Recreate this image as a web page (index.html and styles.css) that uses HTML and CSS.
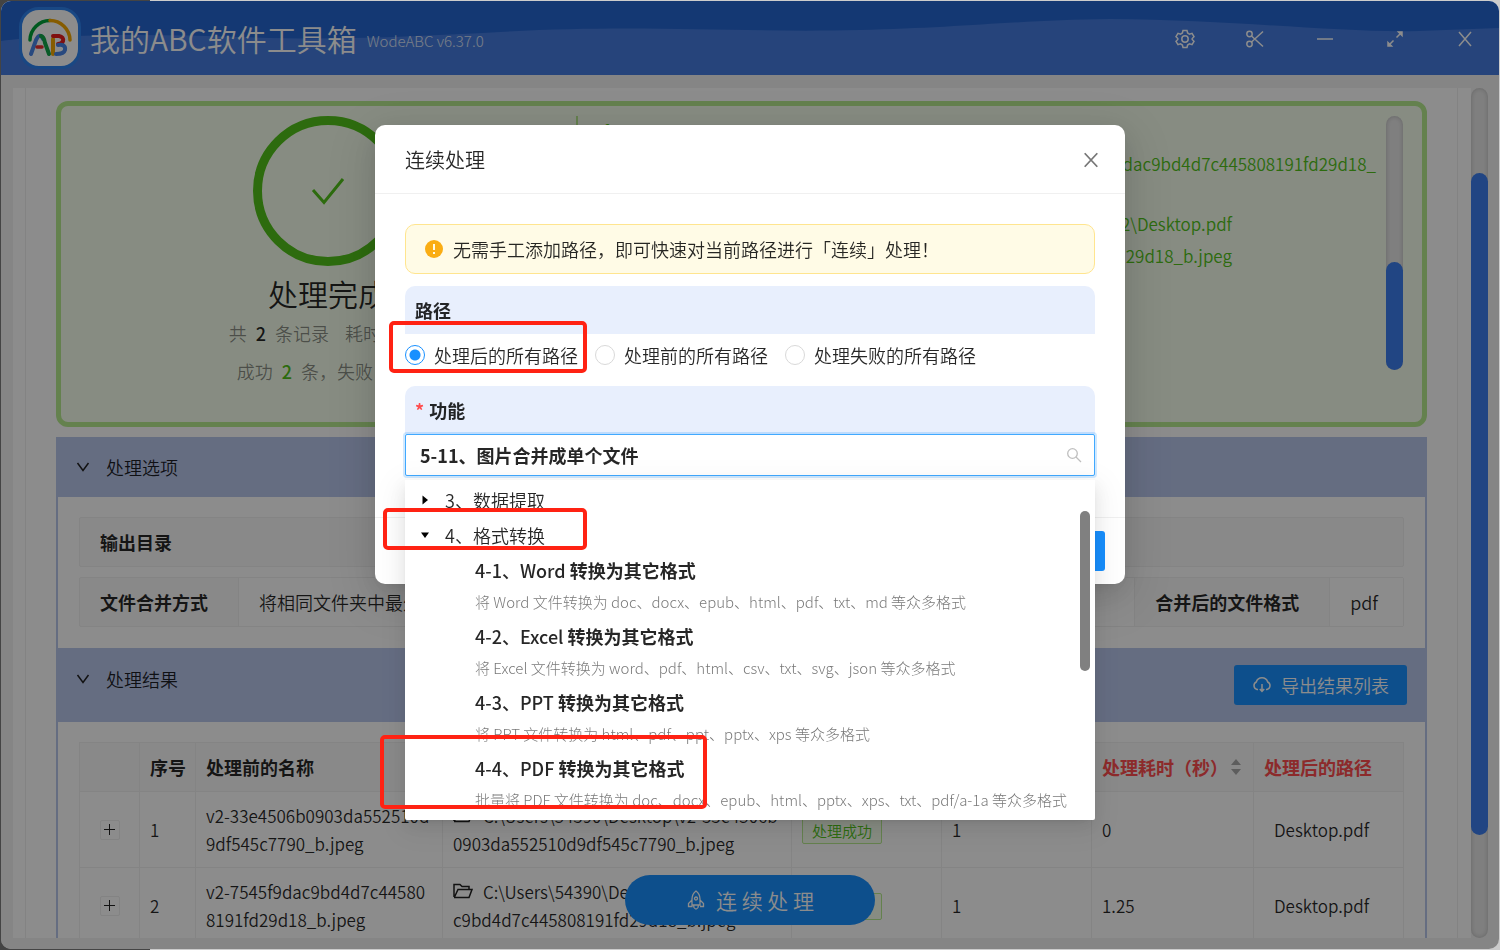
FILE: index.html
```html
<!DOCTYPE html>
<html lang="zh-CN">
  <head>
    <meta charset="UTF-8" />
    <meta name="viewport" content="width=device-width, initial-scale=1.0" />
    <title>我的ABC软件工具箱</title>
    <link rel="stylesheet" href="styles.css">
  </head>
  <body>
    <div class="window">
      <header class="titlebar">
        <svg class="wave" viewBox="0 0 1500 74" preserveAspectRatio="none">
          <path d="M0 40C40 34 140 32 240 36C340 40 420 35 500 31C640 23 740 32 860 29C960 27 1020 19 1110 18C1240 19 1340 32 1420 30L1500 27V74H0Z" fill="#457de0" />
        </svg>
        <div class="logo">
          <svg viewBox="0 0 56 56" fill="none" stroke-linecap="round">
            <path d="M8 30A20 20 0 0 1 28 10.500" stroke="#00a33a" stroke-width="3.500" />
            <path d="M28 10.500A20 20 0 0 1 48 30" stroke="#f5a800" stroke-width="3.500" />
            <path d="M9 44L14 30Q18 22 21 29" stroke="#4a86e8" stroke-width="4" />
            <path d="M19 26Q22 27 23 33L27 44" stroke="#12a64a" stroke-width="4" />
            <path d="M15 37H20" stroke="#ea2c2c" stroke-width="3.500" />
            <path d="M31 29V44" stroke="#f5a800" stroke-width="4" />
            <path d="M31 26H37Q42 27 41 31Q40 34 36 34" stroke="#ea1c1c" stroke-width="4" />
            <path d="M36 35Q44 34 43 40Q42 44 34 44" stroke="#4a86e8" stroke-width="4" />
          </svg>
        </div>
        <h1>我的ABC软件工具箱</h1>
        <span class="version">WodeABC v6.37.0</span>
        <nav class="tools">
          <button aria-label="设置"><svg viewBox="0 0 20 20"><path d="M8 1.500H12L12.600 4L14.500 5.100L17 4.400L19 7.700L17.200 9.500V10.500L19 12.300L17 15.600L14.500 14.900L12.600 16L12 18.500H8L7.400 16L5.500 14.900L3 15.600L1 12.300L2.800 10.500V9.500L1 7.700L3 4.400L5.500 5.100L7.400 4Z" /><circle cx="10" cy="10" r="3.200" /></svg></button>
          <button aria-label="截图"><svg viewBox="0 0 20 20"><circle cx="4.500" cy="5" r="2.700" /><circle cx="4.500" cy="15" r="2.700" /><path d="M6.500 7L18 17.500M6.500 13L18 2.500" /></svg></button>
          <button aria-label="最小化"><svg viewBox="0 0 20 20"><path d="M2 10H18" /></svg></button>
          <button aria-label="最大化"><svg viewBox="0 0 20 20"><path d="M11.500 8.500L16 4M8.500 11.500L4 16" /><path class="solid" d="M13.500 3H17V6.500ZM6.500 17H3V13.500Z" /></svg></button>
          <button aria-label="关闭"><svg viewBox="0 0 20 20"><path d="M4 3L16 17M16 3L4 17" /></svg></button>
        </nav>
      </header>

      <main class="page">
        <div class="content">
          <section class="result">
            <div class="summary">
              <div class="circle">
                <svg viewBox="0 0 34 28"><path d="M2 13L13 25.500L32 2" /></svg>
              </div>
              <h2>处理完成</h2>
              <p>共 <b>2</b> 条记录 &nbsp; &nbsp;耗时 <b>1</b> 秒</p>
              <p>成功 <b class="ok">2</b> 条，失败 <b>0</b> 条</p>
            </div>
            <div class="log">
              <p class="log-top">1fd29d18_b.jpeg</p>
              <p>v2-7545f9dac9bd4d7c445808191fd29d18_</p>
              <p class="short group">C:\Users\54390\Desktop\2\Desktop.pdf</p>
              <p class="short">v2-7545f9dac9bd4d7c445808191fd29d18_b.jpeg</p>
            </div>
            <div class="bar bar-log"><i></i></div>
          </section>

          <section class="panel">
            <h3><svg viewBox="0 0 14 14"><path d="M1.500 3L7 10.500L12.500 3" /></svg>处理选项</h3>
            <div class="panel-body">
              <dl class="desc">
                <dt>输出目录</dt>
                <dd></dd>
              </dl>
              <dl class="desc">
                <dt>文件合并方式</dt>
                <dd class="grow">将相同文件夹中最外层的文件合并成单个文件</dd>
                <dt>合并后的文件格式</dt>
                <dd>pdf</dd>
              </dl>
            </div>
          </section>

          <section class="panel">
            <h3 class="tall"><svg viewBox="0 0 14 14"><path d="M1.500 3L7 10.500L12.500 3" /></svg>处理结果
              <button class="primary"><svg viewBox="0 0 20 20"><path d="M6 14.500H5A4 4 0 0 1 4.300 7A6 6 0 0 1 15.700 7A4 4 0 0 1 15 14.500H14M10 9V16M7.800 14L10 16.300L12.200 14" /></svg>导出结果列表</button>
            </h3>
            <div class="panel-body">
              <table>
                <colgroup>
                  <col class="c-open"><col class="c-no"><col class="c-name"><col><col class="c-mid"><col class="c-mid"><col class="c-time"><col class="c-out">
                </colgroup>
                <thead>
                  <tr>
                    <th></th>
                    <th>序号</th>
                    <th>处理前的名称</th>
                    <th></th>
                    <th></th>
                    <th></th>
                    <th class="red"><span>处理耗时（秒）<svg class="sort" viewBox="0 0 12 18"><path d="M6 1L11 7H1ZM6 17L11 11H1Z" /></svg></span></th>
                    <th class="red">处理后的路径</th>
                  </tr>
                </thead>
                <tbody>
                  <tr>
                    <td><button class="plus" aria-label="展开"></button></td>
                    <td>1</td>
                    <td>v2-33e4506b0903da552510d<br>9df545c7790_b.jpeg</td>
                    <td><svg class="folder" viewBox="0 0 20 16"><path d="M1 14V1.500H7L9 3.500H16V6M1 14.500H16L19 6.500H5L1.500 14" /></svg>C:\Users\54390\Desktop\v2-33e4506b<br>0903da552510d9df545c7790_b.jpeg</td>
                    <td><span class="tag">处理成功</span></td>
                    <td>1</td>
                    <td>0</td>
                    <td class="out">Desktop.pdf</td>
                  </tr>
                  <tr>
                    <td><button class="plus" aria-label="展开"></button></td>
                    <td>2</td>
                    <td>v2-7545f9dac9bd4d7c44580<br>8191fd29d18_b.jpeg</td>
                    <td><svg class="folder" viewBox="0 0 20 16"><path d="M1 14V1.500H7L9 3.500H16V6M1 14.500H16L19 6.500H5L1.500 14" /></svg>C:\Users\54390\Desktop\v2-7545f9da<br>c9bd4d7c445808191fd29d18_b.jpeg</td>
                    <td><span class="tag">处理成功</span></td>
                    <td>1</td>
                    <td>1.25</td>
                    <td class="out">Desktop.pdf</td>
                  </tr>
                </tbody>
              </table>
            </div>
          </section>
        </div>
        <div class="bar bar-page"><i></i></div>
      </main>

      <button class="float-btn"><svg viewBox="0 0 20 20"><path d="M10 1Q6 4 6 9V15H14V9Q14 4 10 1ZM6 10L2.500 13.500V16.500H6V14M14 10L17.500 13.500V16.500H14M7.500 15L8 17.500Q10 20.500 12 17.500L12.500 15" /><circle cx="10" cy="8.500" r="1.500" /></svg>连 续 处 理</button>
    </div>

    <div class="mask">
      <div class="modal" role="dialog" aria-labelledby="modal-title">
        <div class="modal-head">
          <h2 id="modal-title">连续处理</h2>
          <button aria-label="关闭"><svg viewBox="0 0 20 20"><path d="M3 2.500L17 17.500M17 2.500L3 17.500" /></svg></button>
        </div>
        <form class="modal-body">
          <div class="alert">
            <svg viewBox="0 0 18 18"><circle cx="9" cy="9" r="9" fill="#faad14" /><path d="M9 4V10M9 12V14" stroke="#fffbe6" stroke-width="2" /></svg>
            无需手工添加路径，即可快速对当前路径进行「连续」处理！
          </div>
          <div class="label">路径</div>
          <div class="radios">
            <label><input type="radio" name="path" checked>处理后的所有路径</label>
            <label><input type="radio" name="path">处理前的所有路径</label>
            <label><input type="radio" name="path">处理失败的所有路径</label>
          </div>
          <label class="label" for="feature"><em>*</em>功能</label>
          <div class="select">
            <input id="feature" type="text" value="5-11、图片合并成单个文件">
            <svg viewBox="0 0 16 16"><circle cx="6.500" cy="6.500" r="4.800" /><path d="M10 10L15 15" /></svg>
            <div class="dropdown">
              <div class="node"><svg viewBox="0 0 10 10"><path d="M2.500 0.500L8 5L2.500 9.500Z" /></svg>3、数据提取</div>
              <div class="node"><svg viewBox="0 0 10 10"><path d="M1 2.500H9L5 8Z" /></svg>4、格式转换</div>
              <div class="leaf">
                <p class="name">4-1、Word <b>转换为其它格式</b></p>
                <p>将 Word 文件转换为 doc、docx、epub、html、pdf、txt、md 等众多格式</p>
              </div>
              <div class="leaf">
                <p class="name">4-2、Excel <b>转换为其它格式</b></p>
                <p>将 Excel 文件转换为 word、pdf、html、csv、txt、svg、json 等众多格式</p>
              </div>
              <div class="leaf">
                <p class="name">4-3、PPT <b>转换为其它格式</b></p>
                <p>将 PPT 文件转换为 html、pdf、ppt、pptx、xps 等众多格式</p>
              </div>
              <div class="leaf">
                <p class="name">4-4、PDF <b>转换为其它格式</b></p>
                <p>批量将 PDF 文件转换为 doc、docx、epub、html、pptx、xps、txt、pdf/a-1a 等众多格式</p>
              </div>
              <i class="thumb"></i>
            </div>
          </div>
        </form>
        <div class="modal-foot">
          <button class="primary" aria-label="确定"></button>
        </div>
        <div class="mark mark-path"></div>
        <div class="mark mark-group"></div>
        <div class="mark mark-pdf"></div>
      </div>
    </div>
  </body>
</html>
```

FILE: styles.css
```css
* {
  margin: 0;
  padding: 0;
  box-sizing: border-box;
}
body {
  height: 100vh;
  overflow: hidden;
  padding: 1px;
  background: linear-gradient(90deg, #444 10%, #ccc 10%);
  font-family: "Noto Sans CJK SC", "Open Sans", sans-serif;
  font-size: 18px;
  font-weight: 350;
  line-height: 28px;
  color: rgba(0, 0, 0, 0.85);
}
button,
input {
  font: inherit;
  color: inherit;
}
button {
  border: 0;
  background: none;
  cursor: pointer;
}
svg {
  flex: none;
}
.window {
  position: relative;
  height: 100%;
  display: flex;
  flex-direction: column;
  border-radius: 10px;
  overflow: hidden;
  background: #f3f3f3;
}

/* title bar */
.titlebar {
  position: relative;
  display: flex;
  align-items: center;
  height: 74px;
  flex: none;
  padding: 0 19px 0 18px;
  background: #2666d1;
  color: #fff;
}
.wave {
  position: absolute;
  left: 0;
  top: 0;
  width: 100%;
  height: 100%;
}
.logo {
  position: relative;
  width: 62px;
  height: 62px;
  border: 3px solid #2f84f0;
  border-radius: 20px;
  background: #fff;
}
.logo svg {
  display: block;
}
.titlebar h1 {
  position: relative;
  margin: 0 10px 0 9px;
  font-size: 30px;
  font-weight: 350;
}
.version {
  position: relative;
  margin-top: 6px;
  font-size: 15px;
  font-weight: 300;
  opacity: 0.8;
}
.tools {
  position: relative;
  display: flex;
  gap: 40px;
  margin: 2px 0 0 auto;
}
.tools button {
  width: 30px;
  height: 30px;
}
.tools svg {
  display: block;
  width: 20px;
  height: 20px;
  margin: 5px;
  fill: none;
  stroke: #fff;
  stroke-width: 1.5;
}
.tools .solid {
  fill: #fff;
}

/* page */
.page {
  flex: 1;
  min-height: 0;
  display: flex;
  padding: 13px 11px 11px 12px;
}
.content {
  flex: 1;
  min-width: 0;
  margin: 0 13px 0 12px;
  padding: 13px 30px 0;
  overflow: hidden;
  background: #fff;
  border: 1px solid #eee;
  border-width: 0 1px;
  box-shadow: -12px 0 #fff, 13px 0 #fff;
}
.bar {
  width: 17px;
  flex: none;
  border-radius: 9px;
  background: #e8e8e8;
  box-shadow: inset 0 0 5px rgba(0, 0, 0, 0.2);
}
.bar i {
  display: block;
  border-radius: 9px;
  background: #3c7fee;
}
.bar-page {
  padding-top: 85px;
}
.bar-page i {
  height: 662px;
}
.bar-log {
  height: 254px;
  margin-right: 4px;
  padding-top: 146px;
}
.bar-log i {
  height: 108px;
}
.result {
  display: flex;
  height: 326px;
  margin-bottom: 10px;
  padding: 10px 15px;
  border: 5px solid #b7eb8f;
  border-radius: 12px;
  background: #f6ffed;
}
.summary {
  width: 504px;
  flex: none;
  text-align: center;
  color: rgba(0, 0, 0, 0.45);
}
.circle {
  display: flex;
  width: 150px;
  height: 150px;
  margin: 0 auto;
  align-items: center;
  justify-content: center;
  border: 9px solid #52c41a;
  border-radius: 50%;
}
.circle svg {
  width: 34px;
  fill: none;
  stroke: #52c41a;
  stroke-width: 3;
}
.summary h2 {
  padding: 8px 0 2px;
  font-size: 30px;
  font-weight: 350;
  line-height: 38px;
  color: rgba(0, 0, 0, 0.85);
}
.summary p {
  line-height: 38px;
}
.summary b {
  margin: 0 5px;
  font-weight: 500;
  color: rgba(0, 0, 0, 0.85);
}
.summary .ok {
  color: #52c41a;
}
.log {
  flex: 1;
  overflow: hidden;
  margin-left: -4px;
  padding-right: 10px;
  border-left: 2px solid #b7eb8f;
  font-size: 17px;
  line-height: 32px;
  text-align: right;
  color: #52c41a;
}
.log-top {
  padding-left: 16px;
  text-align: left;
}
.log .group {
  margin-top: 28px;
}
.log .short {
  margin-right: 144px;
}

/* collapse panels */
.panel {
  background: #b8c6ec;
}
.panel h3 {
  display: flex;
  align-items: center;
  height: 60px;
  padding: 0 20px;
  font-size: 18px;
  font-weight: 350;
}
.panel h3 > svg {
  width: 14px;
  height: 14px;
  margin-right: 16px;
  fill: none;
  stroke: #222;
  stroke-width: 1.5;
}
.panel .tall {
  height: 74px;
  padding-bottom: 12px;
}
.primary {
  display: flex;
  align-items: center;
  height: 40px;
  border-radius: 3px;
  background: #1890ff;
  color: #fff;
}
.panel .primary {
  margin: 12px 0 0 auto;
  padding: 0 18px;
}
.primary svg {
  width: 20px;
  margin-right: 9px;
  fill: none;
  stroke: #fff;
  stroke-width: 1.5;
}
.panel-body {
  margin: 0 2px;
  padding: 20px 21px 21px;
  background: #fff;
}
.desc {
  display: flex;
  height: 50px;
  border: 1px solid #f0f0f0;
  border-radius: 2px;
  background: #fafafa;
  line-height: 48px;
}
.desc + .desc {
  margin-top: 10px;
}
.desc dt {
  padding: 0 30px 0 20px;
  font-weight: 700;
}
.desc:last-child dd {
  padding: 0 25px 0 20px;
  background: #fff;
  border-left: 1px solid #f0f0f0;
}
.desc dd + dt {
  border-left: 1px solid #f0f0f0;
}
.desc .grow {
  flex: 1;
}

/* result table */
table {
  width: 100%;
  table-layout: fixed;
  border-collapse: collapse;
}
.c-open {
  width: 60px;
}
.c-no {
  width: 56px;
}
.c-name {
  width: 247px;
}
.c-mid {
  width: 150px;
}
.c-time {
  width: 162px;
}
.c-out {
  width: 150px;
}
th,
td {
  padding: 9px 10px;
  border: 1px solid #f0f0f0;
  text-align: left;
  white-space: nowrap;
}
th {
  height: 49px;
  background: #fafafa;
  font-weight: 700;
}
td {
  height: 76px;
  font-size: 17px;
}
.red {
  color: #ff4d4f;
}
.red span {
  display: flex;
  align-items: center;
}
.sort {
  width: 12px;
  margin-left: 2px;
  fill: #aaa;
}
.out {
  padding-left: 20px;
}
.folder {
  width: 20px;
  height: 16px;
  margin-right: 10px;
  fill: none;
  stroke: #222;
  stroke-width: 1.5;
}
.plus {
  display: block;
  width: 20px;
  height: 20px;
  margin: 0 auto;
  border: 1px solid #eee;
  border-radius: 2px;
  background: linear-gradient(#222, #222) center / 11px 1px no-repeat,
    linear-gradient(#222, #222) center / 1px 11px no-repeat;
}
.tag {
  display: inline-block;
  padding: 0 9px;
  border: 1px solid #b7eb8f;
  border-radius: 2px;
  background: #f6ffed;
  font-size: 15px;
  line-height: 25px;
  color: #52c41a;
}
.float-btn {
  position: absolute;
  left: 50%;
  bottom: 24px;
  display: flex;
  align-items: center;
  justify-content: center;
  width: 250px;
  height: 50px;
  margin-left: -125px;
  border-radius: 25px;
  background: #1890ff;
  font-size: 21px;
  color: #fff;
}
.float-btn svg {
  width: 20px;
  margin-right: 10px;
  fill: none;
  stroke: #fff;
  stroke-width: 1.3;
}

/* modal */
.mask {
  position: fixed;
  inset: 1px;
  display: flex;
  justify-content: center;
  align-items: flex-start;
  padding-top: 124px;
  border-radius: 10px;
  background: rgba(0, 0, 0, 0.45);
}
.modal {
  position: relative;
  width: 750px;
  border-radius: 10px;
  background: #fff;
  box-shadow: 0 6px 16px -8px rgba(0, 0, 0, 0.12), 0 9px 28px rgba(0, 0, 0, 0.1),
    0 12px 48px 16px rgba(0, 0, 0, 0.08);
}
.modal-head {
  display: flex;
  align-items: center;
  justify-content: space-between;
  height: 69px;
  padding: 2px 25px 0 30px;
  border-bottom: 1px solid #f0f0f0;
}
.modal-head h2 {
  font-size: 20px;
  font-weight: 350;
}
.modal-head svg {
  display: block;
  width: 18px;
  stroke: #777;
  stroke-width: 2;
}
.modal-body {
  padding: 30px 30px 41px;
}
.alert {
  display: flex;
  align-items: center;
  gap: 10px;
  height: 50px;
  margin-bottom: 12px;
  padding: 0 19px;
  border: 1px solid #ffe58f;
  border-radius: 10px;
  background: #fffbe6;
}
.alert svg {
  width: 18px;
}
.label {
  display: block;
  height: 48px;
  padding: 0 10px;
  border-radius: 10px 10px 0 0;
  background: #e8effd;
  font-weight: 700;
  line-height: 48px;
}
.label em {
  margin-right: 5px;
  font-style: normal;
  color: #ff4d4f;
}
.radios {
  display: flex;
  gap: 17px;
  height: 52px;
  padding-bottom: 10px;
}
.radios label {
  display: flex;
  align-items: center;
}
.radios input {
  appearance: none;
  width: 20px;
  height: 20px;
  margin-right: 9px;
  border: 1px solid #d9d9d9;
  border-radius: 50%;
}
.radios input:checked {
  border-color: #1890ff;
  background: radial-gradient(#1890ff 5px, #fff 6px);
}
.select {
  position: relative;
}
.select input {
  display: block;
  width: 100%;
  height: 42px;
  padding: 0 40px 0 14px;
  border: 1px solid #40a9ff;
  border-radius: 2px;
  outline: 0;
  box-shadow: 0 0 0 2px rgba(24, 144, 255, 0.2);
  font-weight: 700;
}
.select > svg {
  position: absolute;
  right: 13px;
  top: 13px;
  width: 16px;
  fill: none;
  stroke: #bfbfbf;
  stroke-width: 1.3;
}
.dropdown {
  position: absolute;
  z-index: 1;
  left: 0;
  right: 0;
  top: 46px;
  height: 340px;
  padding-top: 2px;
  overflow: hidden;
  border-radius: 2px;
  background: #fff;
}
.select::after {
  content: "";
  position: absolute;
  left: 0;
  right: 0;
  top: 46px;
  height: 340px;
  box-shadow: 0 3px 6px -4px rgba(0, 0, 0, 0.12), 0 6px 16px rgba(0, 0, 0, 0.08),
    0 9px 28px 8px rgba(0, 0, 0, 0.05);
}
.node {
  display: flex;
  align-items: center;
  height: 35px;
  padding-left: 15px;
}
.node svg {
  width: 10px;
  margin-right: 15px;
}
.leaf {
  height: 66px;
  padding-left: 70px;
  font-size: 15px;
  font-weight: 300;
  line-height: 28px;
  white-space: nowrap;
  color: rgba(0, 0, 0, 0.55);
}
.leaf .name {
  font-size: 18px;
  font-weight: 500;
  line-height: 36px;
  color: rgba(0, 0, 0, 0.85);
}
.thumb {
  position: absolute;
  right: 5px;
  top: 31px;
  width: 10px;
  height: 160px;
  border-radius: 5px;
  background: #808080;
}
.modal-foot {
  display: flex;
  justify-content: flex-end;
  padding: 13px 20px;
  border-top: 1px solid #f0f0f0;
}
.modal-foot .primary {
  width: 80px;
}

/* red outlines over the steps */
.mark {
  position: absolute;
  z-index: 2;
  border: 4px solid #ff2213;
  border-radius: 5px;
}
.mark-path {
  left: 14px;
  top: 196px;
  width: 198px;
  height: 52px;
}
.mark-group {
  left: 8px;
  top: 383px;
  width: 204px;
  height: 42px;
}
.mark-pdf {
  left: 5px;
  top: 610px;
  width: 327px;
  height: 74px;
}
```
